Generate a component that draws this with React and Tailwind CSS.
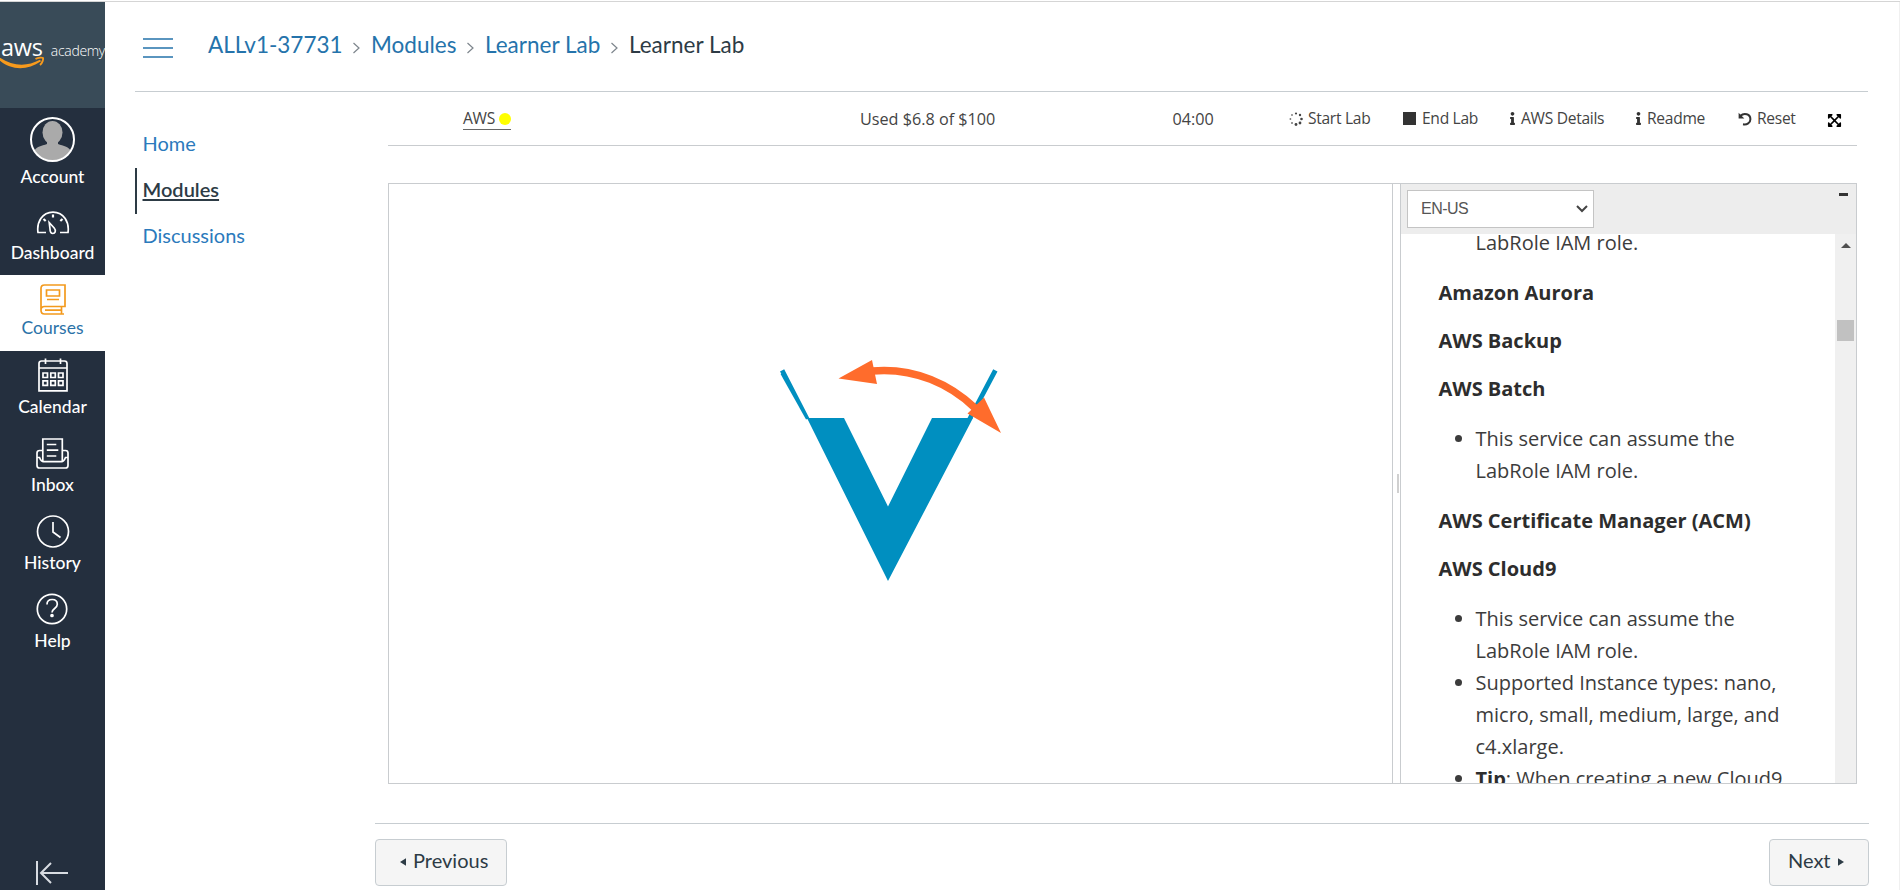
import React from "react";
import { FaInfo, FaExpandArrowsAlt } from "react-icons/fa";

const ink = {
  fill: "none",
  stroke: "currentColor",
  strokeWidth: 1.7,
};

function DashboardIcon() {
  return (
    <svg width="34" height="24" viewBox="0 0 34 24" {...ink}>
      <path d="M10 21.5H2c-1.500-10 4-20.400 15-20.400s16.500 10.400 15 20.400h-8" />
      <path d="M13.200 11.500l5 5.500c2.500 3 .5 5.500-1.200 5.500s-3-1.500-3-4.500z" />
      <path d="M17 3.500v3M7.500 8l2.200 2M26.500 8l-2.200 2" strokeWidth="2.200" />
    </svg>
  );
}

function CoursesIcon() {
  return (
    <svg width="26" height="31" viewBox="0 0 26 31" {...ink}>
      <path d="M4.500 1H25v21.500H4.500C2.500 22.500 1 24 1 26.200S2.500 30 4.500 30H24M1 26V4.500C1 2.500 2.500 1 4.500 1M21.500 22.500V30M5 26.200h16" />
      <path d="M6.500 6h13v6h-13zM7 15.500h12" />
    </svg>
  );
}

function CalendarIcon() {
  return (
    <svg width="30" height="34" viewBox="0 0 30 34" {...ink}>
      <path d="M1 32.800V5.500C1 4 2 3 3.500 3h23C28 3 29 4 29 5.500v27.300zM1 10h28M7.500.5v5.500M22.500.5v5.500" />
      <path d="M5 15h4.500v4.500H5zM12.800 15h4.500v4.500h-4.500zM20.500 15H25v4.500h-4.500zM5 22.800h4.500v4.500H5zM12.800 22.800h4.500v4.500h-4.500zM20.500 22.800H25v4.500h-4.500z" />
    </svg>
  );
}

function InboxIcon() {
  return (
    <svg width="33" height="31" viewBox="0 0 33 31" {...ink}>
      <path d="M6.800 23.500V1h19.500v22.500" />
      <path d="M6.500 12.500H3.500C2 12.500 1 13.500 1 15v12.500C1 29 2 30 3.500 30h26c1.500 0 2.500-1 2.500-2.500V15c0-1.500-1-2.500-2.500-2.500h-3M1 19.500h2.500c1.500 4 2.500 4.200 4 4.200h18c1.500 0 2.500-.2 4-4.200H32" />
      <path d="M10.800 6.500h9.500M10.800 12.200h11.500M10.800 18h9.500" />
    </svg>
  );
}

function HistoryIcon() {
  return (
    <svg width="34" height="33" viewBox="0 0 34 33" {...ink}>
      <circle cx="17" cy="16.500" r="15.500" />
      <path d="M17 7v10l7.500 5.500" />
    </svg>
  );
}

function HelpIcon() {
  return (
    <svg className="-translate-x-[1px]" width="32" height="32" viewBox="0 0 32 32" {...ink}>
      <circle cx="16" cy="16" r="14.700" />
      <path d="M11 11.500c0-3 2-5 5.200-5 3 0 5.100 1.800 5.100 4.700 0 4.500-5.300 4-5.300 8.300" />
      <circle cx="16" cy="22.500" r="1" fill="currentColor" />
    </svg>
  );
}

function NavItem({ icon, label, box, gap = "mt-[4px]", active }) {
  return (
    <a
      className={`flex ${box} flex-col items-center ${
        active ? "bg-white text-[#f39a1e]" : "text-white"
      }`}
    >
      <span className="flex h-[34px] items-center">{icon}</span>
      <span
        className={`${gap} text-[17.5px] leading-[22px] ${
          active ? "text-[#2b72a8]" : "font-medium text-white"
        }`}
      >
        {label}
      </span>
    </a>
  );
}

function Sidebar() {
  return (
    <aside className="flex h-full w-[105px] shrink-0 flex-col bg-[#242f3e]">
      <div className="h-[106px] bg-[#394b58] pt-[33px]">
        <div className="flex h-[24px] items-baseline pl-[1px] whitespace-nowrap text-white">
          <span className="w-[50px] font-['Open_Sans'] text-[23.500px] leading-[24px] font-medium tracking-[-0.2px]">aws</span>
          <span className="font-['Open_Sans'] text-[14px] leading-[24px] font-light tracking-[-0.300px]">academy</span>
        </div>
        <svg className="-mt-[3px]" width="46" height="14" viewBox="0 0 46 14">
          <path d="M0 1.800c13 8.500 27 9 40 2l1 1.500C27 15 11 14 0 4.800z" fill="#f79a1c" />
          <path d="M35.500 3c3-1.700 7-1.500 7.500-1 .5 1-.5 5-3 7" fill="none" stroke="#f79a1c" strokeWidth="1.900" />
        </svg>
      </div>
      <a className="flex h-[93px] flex-col items-center pt-[9px] text-white">
        <svg width="45" height="45" viewBox="0 0 45 45">
          <defs>
            <clipPath id="avatar">
              <circle cx="22.500" cy="22.500" r="21" />
            </clipPath>
          </defs>
          <g clipPath="url(#avatar)" fill="#aaaaaa">
            <ellipse cx="22.500" cy="15.500" rx="10" ry="11.500" />
            <path d="M17 20h11v7c5 2 12 2 14 10v9H3v-9c2-8 9-8 14-10z" />
          </g>
          <circle cx="22.500" cy="22.500" r="21.500" fill="none" stroke="#fff" strokeWidth="2" />
        </svg>
        <span className="mt-[4px] text-[17.500px] leading-[22px] font-medium">Account</span>
      </a>
      <NavItem icon={<DashboardIcon />} label="Dashboard" box="h-[74px] pt-[5px]" gap="mt-[2px]" />
      <NavItem icon={<CoursesIcon />} label="Courses" box="h-[76px] pt-[7px]" gap="mt-[1px]" active />
      <NavItem icon={<CalendarIcon />} label="Calendar" box="h-[78px] pt-[7px]" />
      <NavItem icon={<InboxIcon />} label="Inbox" box="h-[78px] pt-[7px]" />
      <NavItem icon={<HistoryIcon />} label="History" box="h-[78px] pt-[7px]" />
      <NavItem icon={<HelpIcon />} label="Help" box="h-[78px] pt-[7px]" />
      <div className="mt-auto flex pb-[5px] pl-[35px] text-[#d8dce2]">
        <svg width="34" height="24" viewBox="0 0 34 24" fill="none" stroke="currentColor" strokeWidth="2">
          <path d="M2 0v24M33 12H6M16 2L6 12l10 10" />
        </svg>
      </div>
    </aside>
  );
}

function Crumb({ children, width }) {
  return (
    <>
      <a className={`${width} text-[#2573ab]`}>{children}</a>
      <svg className="mt-[5px] mr-[10px] ml-[11px]" width="9" height="12" viewBox="0 0 9 12" fill="none" stroke="#7d858c" strokeWidth="1.200">
        <path d="M1.500 1l5.500 5-5.500 5" />
      </svg>
    </>
  );
}

function Header() {
  return (
    <header className="mr-[31px] ml-[30px] flex h-[90px] items-start border-b border-[#c7cdd1]">
      <svg className="mt-[36px] ml-[8px]" width="30" height="20" viewBox="0 0 30 20" stroke="#2573ab" strokeWidth="1.700">
        <path d="M0 1h30M0 10h30M0 19h30" />
      </svg>
      <nav className="mt-[29px] ml-[35px] flex items-center text-[22.500px] leading-[28px] whitespace-nowrap">
        <Crumb width="w-[133px]">ALLv1-37731</Crumb>
        <Crumb width="w-[84px]">Modules</Crumb>
        <Crumb width="w-[114px]">Learner Lab</Crumb>
        <span className="text-[#2d3b45]">Learner Lab</span>
      </nav>
    </header>
  );
}

function CourseNav() {
  return (
    <nav className="flex w-[240px] shrink-0 flex-col pt-[30px] pl-[30px] text-[20px] text-[#2b7abc]">
      <a className="flex h-[46px] items-center pb-[4px] pl-[7.500px]">Home</a>
      <a className="flex h-[46px] items-center border-l-2 border-[#2d3b45] pb-[4px] pl-[5.500px] font-semibold text-[#2d3b45] underline decoration-2 underline-offset-2">
        Modules
      </a>
      <a className="flex h-[46px] items-center pb-[4px] pl-[7.500px]">Discussions</a>
    </nav>
  );
}

function UndoIcon() {
  return (
    <svg width="14" height="14" viewBox="0 0 14 14">
      <path d="M2.500 3.800C6 .5 12.400 2 12.400 7.200 12.400 11 9 13 5 12.300" fill="none" stroke="#333" strokeWidth="2" />
      <path d="M.6.800v5.700h5.700z" fill="#333" />
    </svg>
  );
}

function SpinnerIcon() {
  return (
    <svg width="14" height="14" viewBox="0 0 14 14" fill="#444">
      <circle cx="7" cy="1.500" r="1.100" />
      <circle cx="11" cy="3" r="1.200" />
      <circle cx="12.500" cy="7" r="1.300" />
      <circle cx="11" cy="11" r="1.400" />
      <circle cx="7" cy="12.500" r="1.400" />
      <circle cx="3" cy="11" r="1" fill="#777" />
      <circle cx="1.400" cy="7" r=".9" fill="#777" />
      <circle cx="3" cy="3" r=".9" fill="#777" />
    </svg>
  );
}

function Tool({ icon, label, width, iconWidth }) {
  return (
    <a className={`flex ${width} shrink-0 items-center`}>
      <span className={`${iconWidth} flex shrink-0 text-[#333]`}>{icon}</span>
      {label}
    </a>
  );
}

function Toolbar() {
  return (
    <div className="mr-[12px] ml-[13px] flex h-[54px] items-center border-b border-[#c9cccf] pt-[1px] font-['Open_Sans'] text-[15.600px] tracking-[-0.300px] whitespace-nowrap text-[#444]">
      <div className="w-[397px] pl-[75px]">
        <span className="inline-flex h-[21px] w-[48px] items-center justify-between border-b border-[#666]">
          AWS <span className="h-[12px] w-[12px] rounded-full bg-[#ff0]" />
        </span>
      </div>
      <span className="w-[312px] pl-[75px] text-[16.200px] tracking-normal">Used $6.8 of $100</span>
      <span className="w-[192px] pl-[75.500px] text-[16.200px] tracking-normal">04:00</span>
      <Tool width="w-[114px]" iconWidth="w-[19px]" icon={<SpinnerIcon />} label="Start Lab" />
      <Tool width="w-[106px]" iconWidth="w-[19px]" icon={<span className="h-[13px] w-[13px] bg-[#333]" />} label="End Lab" />
      <Tool width="w-[126px]" iconWidth="w-[12px]" icon={<FaInfo className="-ml-[3px]" size={13} />} label="AWS Details" />
      <Tool width="w-[103px]" iconWidth="w-[12px]" icon={<FaInfo className="-ml-[3px]" size={13} />} label="Readme" />
      <Tool width="w-[89px]" iconWidth="w-[19px]" icon={<UndoIcon />} label="Reset" />
      <FaExpandArrowsAlt className="mt-[3px]" size={15} color="#000" />
    </div>
  );
}

function ConsoleLogo() {
  return (
    <svg width="260" height="250" viewBox="0 0 260 250">
      <path d="M47 68H84l44 88.500L172 68h41L128 231z" fill="#008fc0" />
      <path d="M20 21.500l4.200-2.300L50 69.500 47 69zM233.200 19.300l4.300 2.200L212.500 68.500 207 69z" fill="#008fc0" />
      <path d="M21.500 23.500L47 69" fill="none" stroke="#008fc0" strokeWidth="2.200" />
      <path d="M112 21c43-4 79 14 103 37" fill="none" stroke="#ff6c2c" strokeWidth="7.500" />
      <path d="M78.500 28.500L112 10l5 24zM241 83l-33.500-19.500L224 47.500z" fill="#ff6c2c" />
    </svg>
  );
}

function Heading({ children }) {
  return <p className="mb-[16px] leading-[32px] font-bold text-[#2d2d2d]">{children}</p>;
}

function Bullets({ children }) {
  return <ul className="mt-[18px] mb-[18px] list-disc pl-[37px]">{children}</ul>;
}

function Readme() {
  return (
    <section className="flex w-[456px] shrink-0 flex-col border-l border-[#c9cccf]">
      <div className="flex h-[50px] shrink-0 items-start justify-between bg-[#ededed] pt-[6px] pr-[8px] pl-[6px]">
        <div className="flex h-[38px] w-[187px] items-center justify-between border border-[#c4c4c4] bg-white pr-[5px] pl-[13px] font-['Liberation_Sans'] text-[16px] tracking-[-0.500px] text-[#555]">
          EN-US
          <svg width="12" height="8" viewBox="0 0 12 8" fill="none" stroke="#444" strokeWidth="2">
            <path d="M1 1l5 5 5-5" />
          </svg>
        </div>
        <span className="mt-[3px] h-[3px] w-[9px] bg-[#333]" />
      </div>
      <div className="flex min-h-0 flex-1">
        <div className="w-[434px] overflow-hidden pl-[37.500px] font-['Open_Sans'] text-[20px] leading-[32px] text-[#3c3c3c]">
          <div className="-mt-[7px] w-[390px]">
            <p className="mb-[18px] pl-[37px]">LabRole IAM role.</p>
            <Heading>Amazon Aurora</Heading>
            <Heading>AWS Backup</Heading>
            <Heading>AWS Batch</Heading>
            <Bullets>
              <li>
                This service can assume the
                <br />
                LabRole IAM role.
              </li>
            </Bullets>
            <Heading>AWS Certificate Manager (ACM)</Heading>
            <Heading>AWS Cloud9</Heading>
            <Bullets>
              <li>
                This service can assume the
                <br />
                LabRole IAM role.
              </li>
              <li>
                Supported Instance types: nano,
                <br />
                micro, small, medium, large, and
                <br />
                c4.xlarge.
              </li>
              <li className="whitespace-nowrap">
                <b className="text-[#2d2d2d]">Tip</b>: When creating a new Cloud9
              </li>
            </Bullets>
          </div>
        </div>
        <div className="flex w-[21px] flex-col items-center bg-[#f0f0f0] pt-[9px]">
          <svg width="10" height="5" viewBox="0 0 10 5">
            <path d="M0 5l5-5 5 5z" fill="#505050" />
          </svg>
          <span className="mt-[72px] h-[21px] w-[17px] bg-[#c1c1c1]" />
        </div>
      </div>
    </section>
  );
}

function Lab() {
  return (
    <div className="mt-[37px] mr-[12px] ml-[13px] flex h-[601px] border border-[#c9cccf]">
      <div className="flex flex-1 items-start border-r border-[#c9cccf] pt-[166px] pl-[371px]">
        <ConsoleLogo />
      </div>
      <div className="flex w-[7px] items-center justify-end pr-[1px]">
        <span className="h-[19px] w-[2px] bg-[#d0d0d0]" />
      </div>
      <Readme />
    </div>
  );
}

function Pager() {
  return (
    <div className="mt-[39px] flex justify-between border-t border-[#c7cdd1] pt-[15px] text-[20px] text-[#2d3b45]">
      <button className="flex h-[47px] w-[132px] items-center gap-[7px] rounded-[4px] border border-[#c7cdd1] bg-[#f5f5f5] pb-[6px] pl-[24px]">
        <svg className="mt-[4px]" width="6" height="8" viewBox="0 0 7 9" fill="currentColor">
          <path d="M7 0v9L0 4.500z" />
        </svg>
        Previous
      </button>
      <button className="flex h-[47px] w-[100px] items-center gap-[7px] rounded-[4px] border border-[#c7cdd1] bg-[#f5f5f5] pb-[6px] pl-[18px]">
        Next
        <svg className="mt-[4px]" width="6" height="8" viewBox="0 0 7 9" fill="currentColor">
          <path d="M0 0v9l7-4.500z" />
        </svg>
      </button>
    </div>
  );
}

export default function App() {
  return (
    <div className="flex h-[890px] w-[1900px] flex-col overflow-hidden bg-white pt-[1px] font-['Lato',sans-serif]">
      <div className="flex min-h-0 flex-1 border-t border-[#d5d5d5]">
        <Sidebar />
        <div className="flex flex-1 flex-col border-r border-[#f0f0f0]">
          <Header />
          <div className="flex">
            <CourseNav />
            <main className="mr-[30px] ml-[30px] flex min-w-0 flex-1 flex-col">
              <Toolbar />
              <Lab />
              <Pager />
            </main>
          </div>
        </div>
      </div>
    </div>
  );
}
